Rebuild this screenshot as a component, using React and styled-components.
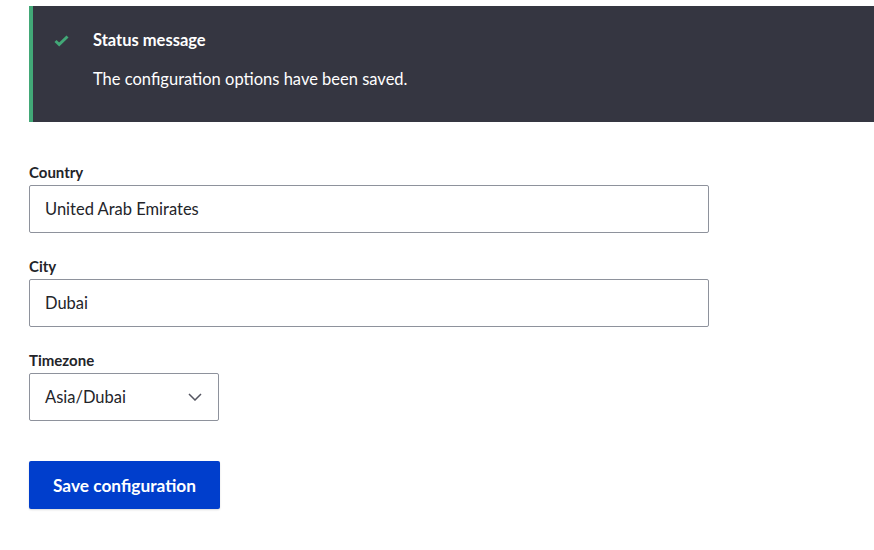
import styled, { createGlobalStyle } from "styled-components"

const GlobalStyle = createGlobalStyle`
  body {
    margin: 0;
    background: #fff;
    font-family: Lato, "Noto Sans", sans-serif;
    color: #232429;
    overflow-x: hidden;
  }
`

const Page = styled.div`
  padding: 6px 0 40px 29px;
`
const Message = styled.div`
  display: flex;
  gap: 24px;
  background: #353641;
  border-left: 4px solid #42a877;
  padding: 24px 20px 32px 21px;
  color: #fff;
  margin-bottom: 41px;
`
const MessageIcon = styled.div`
  padding-top: 1px;
`
const MessageBody = styled.div`
  display: flex;
  flex-direction: column;
  gap: 18px;
`
const MessageTitle = styled.div`
  font-size: 16.5px;
  font-weight: 700;
  line-height: 20px;
`
const MessageText = styled.div`
  font-size: 16.5px;
  line-height: 22px;
`
const Form = styled.form`
  display: flex;
  flex-direction: column;
  gap: 24px;
`
const Field = styled.div`
  display: flex;
  flex-direction: column;
  gap: 4px;
`
const Label = styled.label`
  font-size: 15px;
  font-weight: 700;
  line-height: 18px;
`
const Input = styled.input`
  box-sizing: border-box;
  width: 680px;
  height: 48px;
  padding: 0 15px;
  border: 1px solid #8e929c;
  border-radius: 2px;
  font-family: inherit;
  font-size: 16.5px;
  color: #232429;
  outline: none;
`
const SelectBox = styled.div`
  box-sizing: border-box;
  width: 190px;
  height: 48px;
  display: flex;
  align-items: center;
  justify-content: space-between;
  padding: 0 16px 0 15px;
  border: 1px solid #8e929c;
  border-radius: 2px;
  font-size: 16.5px;
`
const Actions = styled.div`
  padding-top: 16px;
`
const Button = styled.button`
  height: 48px;
  padding: 0 24px;
  background: #003ecc;
  color: #fff;
  border: none;
  border-radius: 2px;
  font-family: inherit;
  font-size: 17.3px;
  font-weight: 700;
  box-shadow: 0 1px 2px rgba(0, 0, 0, 0.15);
`

const App = () => {
  return (
    <Page>
      <GlobalStyle />
      <Message>
        <MessageIcon>
          <svg width="15" height="12" viewBox="0 0 15 12">
            <path d="M1.5 6 L5.2 9.5 L13.5 1.5" fill="none" stroke="#42a877" strokeWidth="3" />
          </svg>
        </MessageIcon>
        <MessageBody>
          <MessageTitle>Status message</MessageTitle>
          <MessageText>The configuration options have been saved.</MessageText>
        </MessageBody>
      </Message>
      <Form>
        <Field>
          <Label>Country</Label>
          <Input defaultValue="United Arab Emirates" />
        </Field>
        <Field>
          <Label>City</Label>
          <Input defaultValue="Dubai" />
        </Field>
        <Field>
          <Label>Timezone</Label>
          <SelectBox>
            <span>Asia/Dubai</span>
            <svg width="14" height="8" viewBox="0 0 14 8">
              <path d="M1 1 L7 7 L13 1" fill="none" stroke="#545560" strokeWidth="1.5" />
            </svg>
          </SelectBox>
        </Field>
        <Actions>
          <Button type="button">Save configuration</Button>
        </Actions>
      </Form>
    </Page>
  )
}

export default App
